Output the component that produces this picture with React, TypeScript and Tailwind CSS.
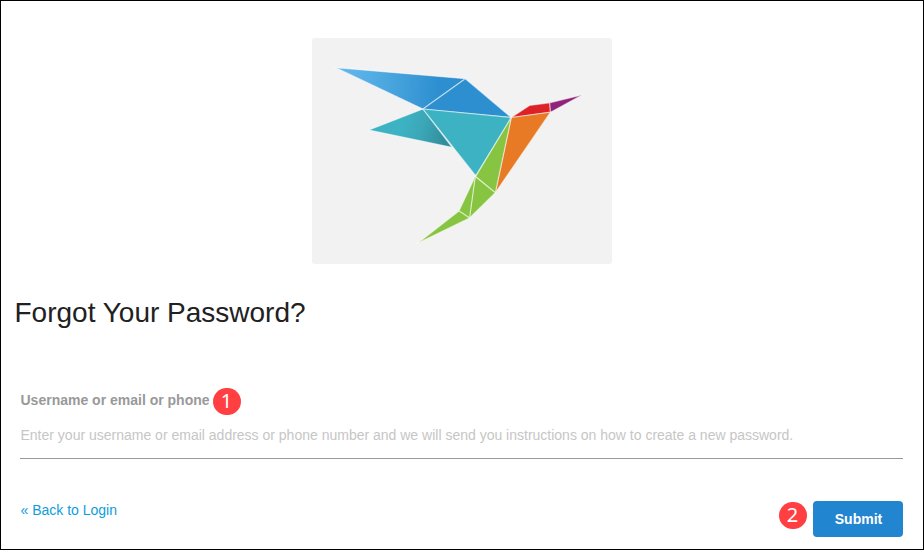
function Hummingbird() {
  return (
    <svg viewBox="0 0 300 226" className="block h-[226px] w-[300px] rounded-[3px] bg-[#f2f2f2]" role="img">
      <defs>
        <linearGradient id="wing" gradientUnits="userSpaceOnUse" x1="35" x2="128" y1="30" y2="38">
          <stop offset="0" stopColor="#60b5ea" />
          <stop offset="0.3" stopColor="#52ace3" />
          <stop offset="1" stopColor="#2d8fcf" />
        </linearGradient>
        <linearGradient id="under" gradientUnits="userSpaceOnUse" x1="90" x2="134" y1="90" y2="103">
          <stop offset="0" stopColor="#3db2c3" />
          <stop offset="0.45" stopColor="#3ba6b6" />
          <stop offset="1" stopColor="#318c9b" />
        </linearGradient>
      </defs>
      <g stroke="#ffffff" strokeOpacity="0.5" strokeWidth="1.2" strokeLinejoin="miter" strokeMiterlimit="12">
        <polygon points="57,92 111,71 140,109.3" fill="url(#under)" />
        <polygon points="24,29.7 153.3,40.7 111,71" fill="url(#wing)" />
        <polygon points="153.3,40.7 199.3,79.5 111,71" fill="#2d8fcf" />
        <polygon points="111,71 199.3,79.5 163.7,137.7" fill="#3db2c3" />
        <polygon points="199.3,79.5 217.5,67.4 237.7,64.8 238.5,74.2" fill="#dc2127" />
        <polygon points="237.7,64.8 270,57 238.5,74.2" fill="#8f237b" />
        <polygon points="199.3,79.5 238.5,74.2 183.3,154.8" fill="#e87a25" />
        <polygon points="199.3,79.5 183.3,154.8 163.7,138.5" fill="#87c441" />
        <polygon points="163.2,138.5 183.3,154.8 157.5,180" fill="#87c441" />
        <polygon points="163.2,138.5 157.5,180 147,173" fill="#87c441" />
        <polygon points="147,173 157.5,180 106,205" fill="#87c441" />
      </g>
    </svg>
  );
}

function Marker({ value }: { value: number }) {
  return (
    <span className="flex h-[27px] w-[28px] items-center justify-center rounded-full bg-[#ff3f42] pb-px font-['Noto_Sans',sans-serif] text-[20px] leading-none text-white">
      {value}
    </span>
  );
}

export default function App() {
  return (
    <main className="flex h-[550px] w-[924px] flex-col border border-black bg-white pt-[37px] font-['Liberation_Sans',Arial,sans-serif] text-sm">
      <div className="flex justify-center">
        <Hummingbird />
      </div>
      <h1 className="mt-[33px] pl-[13.5px] text-[28px] leading-8 text-[#212121]">Forgot Your Password?</h1>
      <form className="mt-[58px] flex flex-col pr-5 pl-[19px]" onSubmit={(e) => e.preventDefault()}>
        <div className="flex h-7 items-start gap-[3px]">
          <label htmlFor="account" className="pt-[3px] pl-[0.5px] font-bold text-[#999999]">
            Username or email or phone
          </label>
          <div className="pt-px">
            <Marker value={1} />
          </div>
        </div>
        <input
          id="account"
          className="h-[44px] border-b border-[#999999] pb-[3px] pl-[0.5px] text-sm outline-none placeholder:text-[#c6c6c6]"
          placeholder="Enter your username or email address or phone number and we will send you instructions on how to create a new password."
        />
        <div className="mt-[42px] flex h-9 items-start justify-between">
          <a href="#" className="-mt-px pl-[0.5px] text-[#0d9ddb]">
            « Back to Login
          </a>
          <div className="flex items-start gap-[6.5px]">
            <div className="pt-px">
              <Marker value={2} />
            </div>
            <button className="h-9 w-[90px] rounded-[4px] bg-[#2185d0] pl-px font-bold text-white">Submit</button>
          </div>
        </div>
      </form>
    </main>
  );
}
